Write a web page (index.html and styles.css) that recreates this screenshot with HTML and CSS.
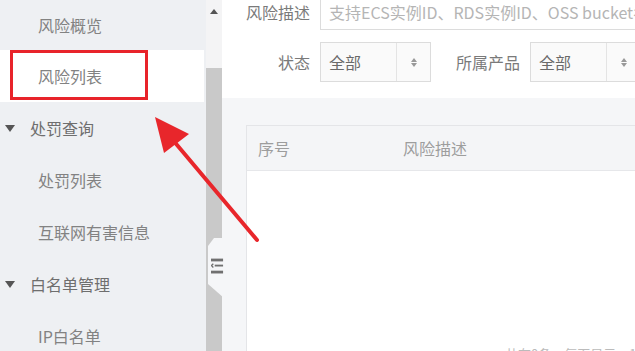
FILE: index.html
```html
<!DOCTYPE html>
<html lang="zh-CN">
<head>
  <meta charset="UTF-8">
  <meta name="viewport" content="width=device-width, initial-scale=1.0">
  <title>风险列表</title>
  <link rel="stylesheet" href="styles.css">
</head>
<body>
  <div class="page">
    <aside class="sidebar">
      <ul class="menu">
        <li class="item sub first">风险概览</li>
        <li class="item sub active">风险列表<span class="mark"></span></li>
        <li class="item group"><span class="caret"></span>处罚查询</li>
        <li class="item sub">处罚列表</li>
        <li class="item sub">互联网有害信息</li>
        <li class="item group"><span class="caret"></span>白名单管理</li>
        <li class="item sub">IP白名单</li>
      </ul>
    </aside>

    <div class="scrollbar">
      <div class="track"><span class="up"></span></div>
      <div class="thumb"></div>
    </div>

    <main class="main">
      <div class="filters">
        <div class="row first-row">
          <label class="label">风险描述</label>
          <div class="input">支持ECS实例ID、RDS实例ID、OSS bucket名称</div>
        </div>
        <div class="row">
          <label class="label">状态</label>
          <div class="select">
            <span class="value">全部</span>
            <span class="toggle"><span class="updown"></span></span>
          </div>
          <label class="label label-wide">所属产品</label>
          <div class="select">
            <span class="value">全部</span>
            <span class="toggle"><span class="updown"></span></span>
          </div>
        </div>
      </div>

      <div class="table">
        <div class="thead">
          <span class="col-no">序号</span>
          <span class="col-desc">风险描述</span>
        </div>
        <div class="tbody"></div>
        <div class="pager">共有0条，每页显示：10条</div>
      </div>
    </main>

    <div class="collapse">
      <svg width="14" height="17" viewBox="0 0 14 17">
        <rect x="0" y="0" width="13" height="3" fill="#707070"/>
        <path d="M2.5 5.5 L0.5 7.5 L2.5 9.5" fill="none" stroke="#707070" stroke-width="1.4"/>
        <rect x="4" y="6.5" width="9" height="2" fill="#707070"/>
        <rect x="0" y="13" width="13" height="3" fill="#707070"/>
      </svg>
    </div>

    <svg class="arrow" width="635" height="351" viewBox="0 0 635 351">
      <line x1="257" y1="240" x2="172" y2="139" stroke="#e8262b" stroke-width="4" stroke-linecap="round"/>
      <polygon points="155,117 164,153 189,134" fill="#e8262b"/>
    </svg>
  </div>
</body>
</html>
```

FILE: styles.css
```css
body {
  margin: 0;
  font-family: "Noto Sans CJK SC", "Noto Sans", sans-serif;
  font-size: 16px;
  background: #f5f6f8;
}
.page {
  position: relative;
  display: flex;
  width: 635px;
  height: 351px;
  overflow: hidden;
}

/* sidebar menu */
.sidebar {
  width: 206px;
  flex-shrink: 0;
  background-color: #eef0f3;
}
.menu {
  list-style: none;
  margin: 0;
  padding: 0;
}
.item {
  position: relative;
  display: flex;
  align-items: center;
  height: 52px;
  margin-right: 2px;
  white-space: nowrap;
}
.item.first {
  height: 50px;
}
.item.sub {
  padding-left: 38px;
  color: #828282;
}
.item.group {
  padding-left: 5px;
  color: #6e6e6e;
}
.item.active {
  background-color: #fff;
}
.caret {
  width: 0;
  height: 0;
  border-left: 5px solid transparent;
  border-right: 5px solid transparent;
  border-top: 7px solid #555;
  margin-right: 15px;
}
.mark {
  position: absolute;
  left: 10px;
  top: 0;
  width: 132px;
  height: 44px;
  border: 3px solid #e8232a;
}

/* scrollbar */
.scrollbar {
  width: 16px;
  flex-shrink: 0;
  display: flex;
  flex-direction: column;
}
.track {
  height: 68px;
  background-color: #f4f4f5;
  display: flex;
  justify-content: center;
  padding-top: 9px;
  box-sizing: border-box;
}
.up {
  width: 0;
  height: 0;
  border-left: 4px solid transparent;
  border-right: 4px solid transparent;
  border-bottom: 5px solid #555;
}
.thumb {
  flex: 1;
  background-color: #c9c9c9;
}

/* main area */
.main {
  flex: 1;
  min-width: 0;
  background-color: #f5f6f8;
}
.filters {
  display: flex;
  flex-direction: column;
  background-color: #fff;
  height: 98px;
}
.row {
  display: flex;
  align-items: center;
  height: 40px;
  margin-top: 12px;
}
.row.first-row {
  margin-top: -6px;
  height: 36px;
}
.label {
  width: 88px;
  flex-shrink: 0;
  padding-right: 10px;
  text-align: right;
  color: #7a7a7a;
  white-space: nowrap;
}
.label-wide {
  width: auto;
  margin-left: 25px;
}
.input {
  flex-shrink: 0;
  width: 340px;
  height: 36px;
  box-sizing: border-box;
  border: 1px solid #dcdcdc;
  padding-left: 8px;
  display: flex;
  align-items: center;
  color: #b5b5b5;
  white-space: nowrap;
  overflow: hidden;
}
.select {
  flex-shrink: 0;
  display: flex;
  width: 111px;
  height: 40px;
  box-sizing: border-box;
  border: 1px solid #dcdcdc;
  background-color: #fafafa;
}
.value {
  width: 76px;
  padding-left: 8px;
  box-sizing: border-box;
  display: flex;
  align-items: center;
  color: #6a6a6a;
  border-right: 1px solid #e4e4e4;
}
.toggle {
  flex: 1;
  display: flex;
  align-items: center;
  justify-content: center;
}
.updown {
  display: flex;
  flex-direction: column;
  align-items: center;
  gap: 1px;
}
.updown::before,
.updown::after {
  content: "";
  width: 0;
  height: 0;
  border-left: 3px solid transparent;
  border-right: 3px solid transparent;
}
.updown::before {
  border-bottom: 4px solid #999;
}
.updown::after {
  border-top: 4px solid #999;
}

/* table */
.table {
  margin: 27px 0 0 24px;
  border: 1px solid #e4e5e8;
  border-right: none;
  background-color: #fff;
}
.thead {
  display: flex;
  align-items: center;
  height: 44px;
  background-color: #f4f5f7;
  border-bottom: 1px solid #e6e7ea;
  color: #9d9d9d;
}
.col-no {
  width: 145px;
  padding-left: 11px;
}
.tbody {
  height: 173px;
}
.pager {
  padding-left: 258px;
  font-size: 13px;
  color: #bbb;
  white-space: nowrap;
}

/* overlays */
.collapse {
  position: absolute;
  left: 208px;
  top: 238px;
  width: 16px;
  height: 60px;
  background-color: #f5f6f8;
  clip-path: polygon(0 8px, 6px 0, 100% 0, 100% 100%, 100% 100%, 0 46px);
  display: flex;
  align-items: center;
  justify-content: center;
  padding-left: 3px;
  padding-bottom: 4px;
  box-sizing: border-box;
}
.arrow {
  position: absolute;
  left: 0;
  top: 0;
  pointer-events: none;
}
```
